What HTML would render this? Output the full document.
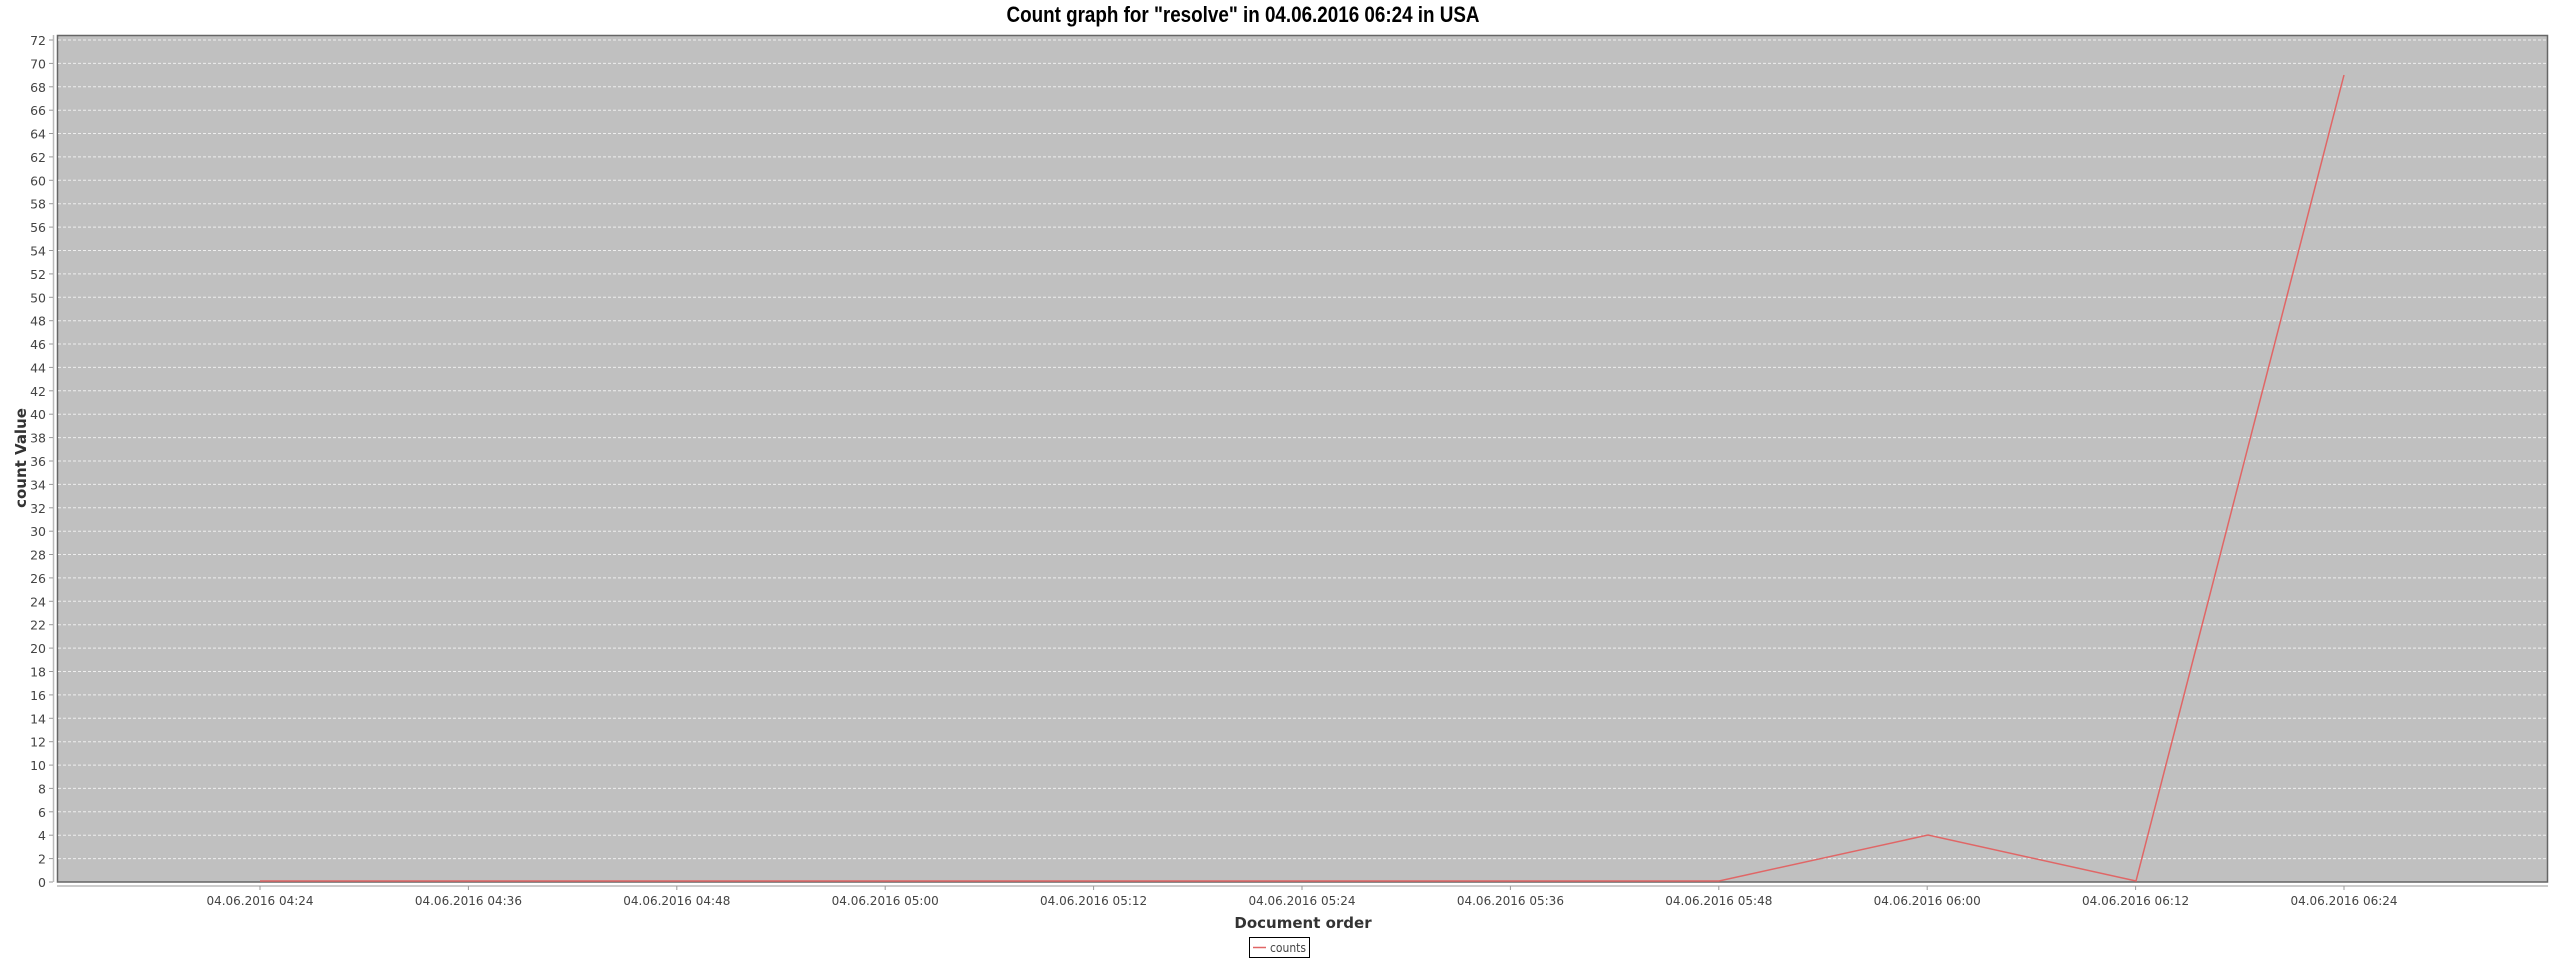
<!DOCTYPE html>
<html><head><meta charset="utf-8"><style>
html,body{margin:0;padding:0;background:#fff;width:2560px;height:960px;overflow:hidden}
svg{display:block}
text{font-family:"DejaVu Sans","Liberation Sans",sans-serif;fill:#444}
</style></head><body>
<svg width="2560" height="960" viewBox="0 0 2560 960" xmlns="http://www.w3.org/2000/svg">
<text x="1243" y="22" text-anchor="middle" font-size="22" font-weight="bold" style="fill:#000;font-family:'Liberation Sans',sans-serif" textLength="473" lengthAdjust="spacingAndGlyphs">Count graph for "resolve" in 04.06.2016 06:24 in USA</text>
<rect x="57.5" y="35.5" width="2490" height="846.5" fill="#c0c0c0" stroke="#666" stroke-width="1.5"/>
<g stroke="#eee" stroke-width="1" stroke-dasharray="3,2">
<line x1="58" x2="2547" y1="858.6" y2="858.6"/><line x1="58" x2="2547" y1="835.2" y2="835.2"/><line x1="58" x2="2547" y1="811.8" y2="811.8"/><line x1="58" x2="2547" y1="788.4" y2="788.4"/><line x1="58" x2="2547" y1="765.1" y2="765.1"/><line x1="58" x2="2547" y1="741.7" y2="741.7"/><line x1="58" x2="2547" y1="718.3" y2="718.3"/><line x1="58" x2="2547" y1="694.9" y2="694.9"/><line x1="58" x2="2547" y1="671.5" y2="671.5"/><line x1="58" x2="2547" y1="648.1" y2="648.1"/><line x1="58" x2="2547" y1="624.7" y2="624.7"/><line x1="58" x2="2547" y1="601.3" y2="601.3"/><line x1="58" x2="2547" y1="577.9" y2="577.9"/><line x1="58" x2="2547" y1="554.5" y2="554.5"/><line x1="58" x2="2547" y1="531.2" y2="531.2"/><line x1="58" x2="2547" y1="507.8" y2="507.8"/><line x1="58" x2="2547" y1="484.4" y2="484.4"/><line x1="58" x2="2547" y1="461.0" y2="461.0"/><line x1="58" x2="2547" y1="437.6" y2="437.6"/><line x1="58" x2="2547" y1="414.2" y2="414.2"/><line x1="58" x2="2547" y1="390.8" y2="390.8"/><line x1="58" x2="2547" y1="367.4" y2="367.4"/><line x1="58" x2="2547" y1="344.0" y2="344.0"/><line x1="58" x2="2547" y1="320.7" y2="320.7"/><line x1="58" x2="2547" y1="297.3" y2="297.3"/><line x1="58" x2="2547" y1="273.9" y2="273.9"/><line x1="58" x2="2547" y1="250.5" y2="250.5"/><line x1="58" x2="2547" y1="227.1" y2="227.1"/><line x1="58" x2="2547" y1="203.7" y2="203.7"/><line x1="58" x2="2547" y1="180.3" y2="180.3"/><line x1="58" x2="2547" y1="156.9" y2="156.9"/><line x1="58" x2="2547" y1="133.5" y2="133.5"/><line x1="58" x2="2547" y1="110.2" y2="110.2"/><line x1="58" x2="2547" y1="86.8" y2="86.8"/><line x1="58" x2="2547" y1="63.4" y2="63.4"/><line x1="58" x2="2547" y1="40.0" y2="40.0"/>
</g>
<polyline points="260,881 1719,881 1928,835 2136,881 2344,75" fill="none" stroke="#e06666" stroke-width="1.5"/>
<line x1="53.5" y1="35" x2="53.5" y2="882" stroke="#bbb" stroke-width="1.5"/>
<line x1="57" y1="886" x2="2548" y2="886" stroke="#bbb" stroke-width="1.5"/>
<g stroke="#999" stroke-width="1">
<line x1="49" x2="53" y1="882" y2="882"/><line x1="49" x2="53" y1="858.6" y2="858.6"/><line x1="49" x2="53" y1="835.2" y2="835.2"/><line x1="49" x2="53" y1="811.8" y2="811.8"/><line x1="49" x2="53" y1="788.4" y2="788.4"/><line x1="49" x2="53" y1="765.1" y2="765.1"/><line x1="49" x2="53" y1="741.7" y2="741.7"/><line x1="49" x2="53" y1="718.3" y2="718.3"/><line x1="49" x2="53" y1="694.9" y2="694.9"/><line x1="49" x2="53" y1="671.5" y2="671.5"/><line x1="49" x2="53" y1="648.1" y2="648.1"/><line x1="49" x2="53" y1="624.7" y2="624.7"/><line x1="49" x2="53" y1="601.3" y2="601.3"/><line x1="49" x2="53" y1="577.9" y2="577.9"/><line x1="49" x2="53" y1="554.5" y2="554.5"/><line x1="49" x2="53" y1="531.2" y2="531.2"/><line x1="49" x2="53" y1="507.8" y2="507.8"/><line x1="49" x2="53" y1="484.4" y2="484.4"/><line x1="49" x2="53" y1="461.0" y2="461.0"/><line x1="49" x2="53" y1="437.6" y2="437.6"/><line x1="49" x2="53" y1="414.2" y2="414.2"/><line x1="49" x2="53" y1="390.8" y2="390.8"/><line x1="49" x2="53" y1="367.4" y2="367.4"/><line x1="49" x2="53" y1="344.0" y2="344.0"/><line x1="49" x2="53" y1="320.7" y2="320.7"/><line x1="49" x2="53" y1="297.3" y2="297.3"/><line x1="49" x2="53" y1="273.9" y2="273.9"/><line x1="49" x2="53" y1="250.5" y2="250.5"/><line x1="49" x2="53" y1="227.1" y2="227.1"/><line x1="49" x2="53" y1="203.7" y2="203.7"/><line x1="49" x2="53" y1="180.3" y2="180.3"/><line x1="49" x2="53" y1="156.9" y2="156.9"/><line x1="49" x2="53" y1="133.5" y2="133.5"/><line x1="49" x2="53" y1="110.2" y2="110.2"/><line x1="49" x2="53" y1="86.8" y2="86.8"/><line x1="49" x2="53" y1="63.4" y2="63.4"/><line x1="49" x2="53" y1="40.0" y2="40.0"/>
<line x1="260" x2="260" y1="886" y2="890"/><line x1="468.4" x2="468.4" y1="886" y2="890"/><line x1="676.8" x2="676.8" y1="886" y2="890"/><line x1="885.2" x2="885.2" y1="886" y2="890"/><line x1="1093.6" x2="1093.6" y1="886" y2="890"/><line x1="1302" x2="1302" y1="886" y2="890"/><line x1="1510.4" x2="1510.4" y1="886" y2="890"/><line x1="1718.8" x2="1718.8" y1="886" y2="890"/><line x1="1927.2" x2="1927.2" y1="886" y2="890"/><line x1="2135.6" x2="2135.6" y1="886" y2="890"/><line x1="2344" x2="2344" y1="886" y2="890"/>
</g>
<g font-size="12.5" text-anchor="end">
<text x="46" y="887">0</text><text x="46" y="863.6">2</text><text x="46" y="840.2">4</text><text x="46" y="816.8">6</text><text x="46" y="793.4">8</text><text x="46" y="770.1">10</text><text x="46" y="746.7">12</text><text x="46" y="723.3">14</text><text x="46" y="699.9">16</text><text x="46" y="676.5">18</text><text x="46" y="653.1">20</text><text x="46" y="629.7">22</text><text x="46" y="606.3">24</text><text x="46" y="582.9">26</text><text x="46" y="559.5">28</text><text x="46" y="536.2">30</text><text x="46" y="512.8">32</text><text x="46" y="489.4">34</text><text x="46" y="466.0">36</text><text x="46" y="442.6">38</text><text x="46" y="419.2">40</text><text x="46" y="395.8">42</text><text x="46" y="372.4">44</text><text x="46" y="349.0">46</text><text x="46" y="325.7">48</text><text x="46" y="302.3">50</text><text x="46" y="278.9">52</text><text x="46" y="255.5">54</text><text x="46" y="232.1">56</text><text x="46" y="208.7">58</text><text x="46" y="185.3">60</text><text x="46" y="161.9">62</text><text x="46" y="138.5">64</text><text x="46" y="115.2">66</text><text x="46" y="91.8">68</text><text x="46" y="68.4">70</text><text x="46" y="45.0">72</text>
</g>
<g font-size="12" text-anchor="middle">
<text x="260" y="905">04.06.2016 04:24</text><text x="468.4" y="905">04.06.2016 04:36</text><text x="676.8" y="905">04.06.2016 04:48</text><text x="885.2" y="905">04.06.2016 05:00</text><text x="1093.6" y="905">04.06.2016 05:12</text><text x="1302" y="905">04.06.2016 05:24</text><text x="1510.4" y="905">04.06.2016 05:36</text><text x="1718.8" y="905">04.06.2016 05:48</text><text x="1927.2" y="905">04.06.2016 06:00</text><text x="2135.6" y="905">04.06.2016 06:12</text><text x="2344" y="905">04.06.2016 06:24</text>
</g>
<text x="1303" y="928" text-anchor="middle" font-size="15" font-weight="bold" style="fill:#333">Document order</text>
<text transform="translate(26,458) rotate(-90)" text-anchor="middle" font-size="15" font-weight="bold" style="fill:#333">count Value</text>
<rect x="1249.5" y="937.5" width="60" height="20" fill="#fff" stroke="#000" stroke-width="1"/>
<line x1="1253" y1="947.5" x2="1266" y2="947.5" stroke="#e06666" stroke-width="1.5"/>
<text x="1270" y="952" font-size="12" textLength="36" lengthAdjust="spacingAndGlyphs">counts</text>
</svg>
</body></html>
